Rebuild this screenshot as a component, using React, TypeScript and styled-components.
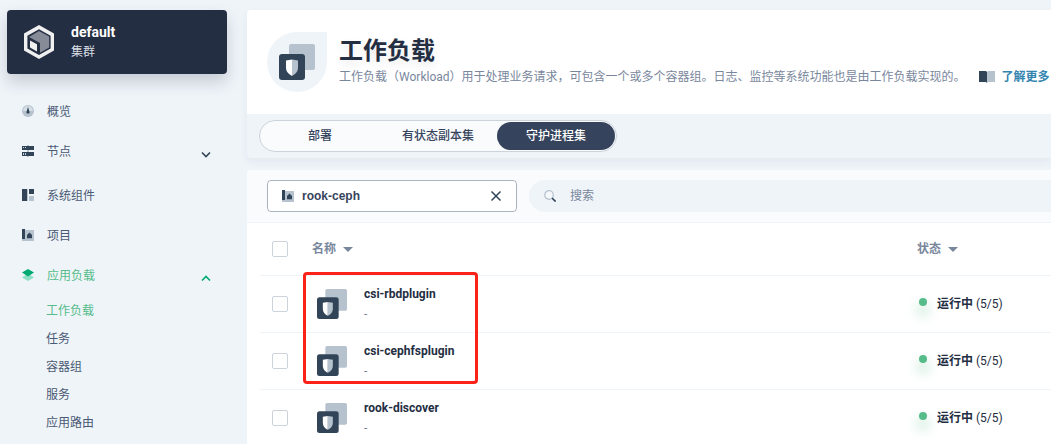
import React from "react";
import styled, { createGlobalStyle } from "styled-components";

const GlobalStyle = createGlobalStyle`
  * { box-sizing: border-box; }
  body {
    margin: 0;
    background: #eff4f9;
    color: #242e42;
    font-family: Roboto, "Noto Sans CJK SC", sans-serif;
    font-size: 12px;
    line-height: 20px;
    overflow: hidden;
  }
  button, input { font: inherit; color: inherit; }
  ul { list-style: none; margin: 0; padding: 0; }
  svg { display: block; flex: none; }
`;

const Page = styled.div`
  display: flex;
  min-height: 100vh;
  padding-top: 10px;
`;

const Sidebar = styled.aside`
  flex: 0 0 247px;
  padding: 0 20px 0 7px;
`;

const ClusterCard = styled.button`
  display: flex;
  align-items: center;
  gap: 12px;
  width: 100%;
  height: 64px;
  padding: 0 12px;
  border: 0;
  border-radius: 4px;
  background: #242e42;
  color: #fff;
  text-align: left;
  box-shadow: 0 8px 16px rgba(36, 46, 66, 0.2);
`;

const ClusterText = styled.span`
  display: flex;
  flex-direction: column;
  color: #d8dee5;
`;

const ClusterName = styled.strong`
  font-size: 14px;
  color: #fff;
`;

const Nav = styled.nav`
  padding-top: 18px;
`;

const NavItem = styled.li<{ $spaced?: boolean }>`
  margin-bottom: ${(p) => (p.$spaced ? 4 : 0)}px;
`;

const NavIcon = styled.span`
  padding-bottom: 2px;
`;

const NavLink = styled.a<{ $active?: boolean }>`
  display: flex;
  align-items: center;
  gap: 13px;
  height: 40px;
  padding: 0 16px 0 15px;
  color: ${(p) => (p.$active ? "#55bc8a" : "#4a5974")};
  text-decoration: none;
`;

const Chevron = styled.svg<{ $active?: boolean }>`
  margin: 4px 0 0 auto;
  fill: none;
  stroke: ${(p) => (p.$active ? "#00aa72" : "#324558")};
  stroke-width: 1.6;
`;

const SubList = styled.ul`
  padding-top: 1px;
`;

const SubLink = styled.a<{ $active?: boolean }>`
  display: block;
  padding: 4px 0 4px 39px;
  color: ${(p) => (p.$active ? "#55bc8a" : "#4a5974")};
  text-decoration: none;
`;

const Main = styled.main`
  flex: 1;
  min-width: 0;
  display: flex;
  flex-direction: column;
  gap: 12px;
`;

const Banner = styled.section`
  border-radius: 4px 0 0 4px;
  background: #eff4f9;
  box-shadow: 0 4px 8px rgba(36, 46, 66, 0.06);
`;

const BannerTop = styled.header`
  display: flex;
  align-items: center;
  gap: 12px;
  height: 104px;
  padding-left: 20px;
  border-radius: 4px 0 0 0;
  background: #fff;
`;

const BannerIcon = styled.div`
  display: grid;
  place-items: center;
  flex: none;
  width: 60px;
  height: 60px;
  border-radius: 50% 0 50% 50%;
  background: #eff4f9;
`;

const BannerText = styled.div`
  padding-bottom: 2px;
`;

const Title = styled.h1`
  margin: 0;
  font-size: 24px;
  line-height: 32px;
  text-shadow: 0 4px 8px rgba(36, 46, 66, 0.1);
`;

const Description = styled.p`
  display: flex;
  align-items: center;
  gap: 12px;
  margin: 0;
  color: #79879c;
  white-space: nowrap;
`;

const LearnMore = styled.a`
  display: flex;
  align-items: center;
  gap: 6px;
  color: #3385b0;
  font-weight: 700;
  text-decoration: none;
`;

const TabStrip = styled.div`
  display: flex;
  padding: 6px 12px;
`;

const Tabs = styled.div`
  display: flex;
  padding: 1px;
  border: 1px solid #ccd3db;
  border-radius: 16px;
  background: #f9fbfd;
`;

const Tab = styled.button<{ $active?: boolean }>`
  width: 118px;
  height: 28px;
  padding: 0;
  border: 0;
  border-radius: 14px;
  background: ${(p) => (p.$active ? "#36435c" : "transparent")};
  color: ${(p) => (p.$active ? "#fff" : "#36435c")};
  font-weight: 500;
`;

const Panel = styled.section`
  flex: 1;
  border-radius: 4px 0 0 0;
  background: #fff;
`;

const Toolbar = styled.div`
  display: flex;
  gap: 12px;
  padding: 10px 0 10px 20px;
  border-bottom: 1px solid #eff4f9;
  border-radius: 4px 0 0 0;
  background: #f9fbfd;
`;

const ProjectFilter = styled.label`
  display: flex;
  align-items: center;
  gap: 8px;
  width: 250px;
  height: 32px;
  padding: 0 14px;
  border: 1px solid #abb4be;
  border-radius: 4px;
  background: #fff;
`;

const ProjectInput = styled.input`
  flex: 1;
  min-width: 0;
  padding: 0;
  border: 0;
  outline: 0;
  background: none;
  color: #36435c;
  font-family: "Liberation Sans", "Noto Sans CJK SC", sans-serif;
  font-weight: 700;
`;

const ClearButton = styled.button`
  padding: 0;
  border: 0;
  background: none;
`;

const SearchBox = styled.label`
  display: flex;
  flex: 1;
  align-items: center;
  gap: 14px;
  height: 32px;
  padding-left: 15px;
  border-radius: 16px 0 0 16px;
  background: #eff4f9;
`;

const SearchInput = styled.input`
  flex: 1;
  min-width: 0;
  padding: 0;
  border: 0;
  outline: 0;
  background: none;
  &::placeholder { color: #79879c; opacity: 1; }
`;

const TableArea = styled.div`
  position: relative;
  padding-left: 13px;
`;

const Table = styled.table`
  width: 100%;
  table-layout: fixed;
  border-collapse: separate;
  border-spacing: 0;
`;

const HeadCell = styled.th<{ $width?: number }>`
  width: ${(p) => (p.$width ? `${p.$width}px` : "auto")};
  height: 53px;
  padding: 0 0 0 12px;
  border-bottom: 1px solid #eff4f9;
  color: #79879c;
  font-weight: 700;
  text-align: left;
`;

const Cell = styled.td`
  height: 57px;
  padding: 0 0 0 12px;
  border-bottom: 1px solid #eff4f9;
`;

const SortButton = styled.button`
  display: flex;
  align-items: center;
  gap: 7px;
  padding: 0;
  border: 0;
  background: none;
`;

const Checkbox = styled.input`
  display: block;
  appearance: none;
  width: 16px;
  height: 16px;
  margin: 0;
  border: 1px solid #ccd3db;
  border-radius: 2px;
  background: #fff;
`;

const Workload = styled.div`
  display: flex;
  align-items: center;
  gap: 17px;
  padding-left: 5px;
`;

const WorkloadText = styled.div`
  display: flex;
  flex-direction: column;
  color: #79879c;
`;

const WorkloadName = styled.a`
  color: #242e42;
  font-weight: 700;
  text-decoration: none;
`;

const Status = styled.div`
  display: flex;
  align-items: center;
  gap: 10px;
  padding-left: 2px;
`;

const StatusDot = styled.span`
  width: 8px;
  height: 8px;
  margin-bottom: 4px;
  border-radius: 50%;
  background: #55bc8a;
  box-shadow: 0 8px 12px 3px rgba(85, 188, 138, 0.24);
`;

const Highlight = styled.div`
  position: absolute;
  top: 49px;
  left: 56px;
  width: 175px;
  height: 112px;
  border: 3px solid #fb2318;
  border-radius: 4px;
  pointer-events: none;
`;

const ClusterIcon = () => (
  <svg width="40" height="40" viewBox="0 0 40 40">
    <path d="M20 3 35 11.4v17.2L20 37 5 28.6V11.4z" fill="#f0f0f0" />
    <path d="M20 7.2 31.6 13.8v12.6L20 33 8.4 26.4V13.8z" fill="#242e42" />
    <path d="M20 9 30.2 14.6v10.8L21 30.8V21L10 15z" fill="#868b97" />
    <path d="M11 18.4 18 22.2v7.2l-7-4z" fill="#f0f0f0" />
  </svg>
);

const WorkloadIcon = ({ size }: { size: number }) => (
  <svg width={size} height={size} viewBox="2 2 36 36">
    <rect x="12" y="2" width="26" height="26" rx="2" fill="#b6c2cd" />
    <rect x="2" y="12" width="26" height="26" rx="3" fill="#324558" />
    <path d="M15 17.6 9 18.6v7c0 4.4 3 7 6 8.4z" fill="#fff" />
    <path d="M15 17.6 21 18.6v7c0 4.4-3 7-6 8.4z" fill="#b6c2cd" />
  </svg>
);

const OverviewIcon = () => (
  <svg width="12" height="12" viewBox="0 0 12 12">
    <circle cx="6" cy="6" r="6" fill="#b6c2cd" />
    <path d="M6 1a5 5 0 0 1 5 5H1a5 5 0 0 1 5-5z" fill="#d5dde5" />
    <path d="M6 2 7.4 6.4a1.5 1.5 0 1 1-2.8 0z" fill="#324558" />
  </svg>
);

const NodeIcon = () => (
  <svg width="12" height="12" viewBox="0 0 12 12">
    <path d="M5 0h2v12H5z" fill="#b6c2cd" />
    <path d="M0 1h12v4H0zM0 7h12v4H0z" fill="#324558" />
    <path d="M1 2h1v1H1zM3 2h1v1H3zM1 8h1v2H1zM3 8h1v2H3z" fill="#c8d1da" />
  </svg>
);

const ComponentIcon = () => (
  <svg width="12" height="12" viewBox="0 0 12 12">
    <path d="M0 0h5v12H0zM7 0h5v5H7z" fill="#324558" />
    <path d="M5 0h1v12H5zM7 7h5v5H7z" fill="#b6c2cd" />
  </svg>
);

const ProjectIcon = () => (
  <svg width="12" height="12" viewBox="0 0 12 12">
    <path d="M3 1h9v11H0V10h3z" fill="#b6c2cd" />
    <path d="M0 0h3v10H0z" fill="#324558" />
    <path d="M7.5 3.6 10 6v3.2H5V6z" fill="#324558" />
  </svg>
);

const AppIcon = () => (
  <svg width="12" height="12" viewBox="0 0 12 12">
    <path d="M6 4.6 12 8.4 6 12 0 8.4z" fill="#90e0c5" />
    <path d="M6 0 12 3.6 6 7.4 0 3.6z" fill="#00aa72" />
  </svg>
);

const BookIcon = () => (
  <svg width="18" height="14" viewBox="0 0 18 14">
    <path d="M1 1h7l1 1v11l-1-1H1z" fill="#324558" />
    <path d="M17 1h-7L9 2v11l1-1h7z" fill="#b6c2cd" />
  </svg>
);

const SearchIcon = () => (
  <svg width="12" height="12" viewBox="0 0 12 12">
    <circle cx="5" cy="5" r="4.3" fill="#f9fbfd" fillOpacity="0.5" stroke="#b6c2cd" strokeWidth="1.2" />
    <path d="m8 8 3.6 3.6" stroke="#324558" strokeWidth="1.6" />
  </svg>
);

const CloseIcon = () => (
  <svg width="12" height="12" viewBox="0 0 12 12">
    <path d="m1.5 1.5 9 9M10.5 1.5l-9 9" stroke="#324558" strokeWidth="1.5" />
  </svg>
);

const CaretIcon = () => (
  <svg width="10" height="5" viewBox="0 0 10 5">
    <path d="M0 0h10L5 5z" fill="#79879c" />
  </svg>
);

const navItems = [
  { label: "概览", icon: <OverviewIcon /> },
  { label: "节点", icon: <NodeIcon />, chevron: "m1 1.5 4 4 4-4", spaced: true },
  { label: "系统组件", icon: <ComponentIcon /> },
  { label: "项目", icon: <ProjectIcon /> },
  { label: "应用负载", icon: <AppIcon />, chevron: "m1 5.5 4-4 4 4", active: true },
];
const subItems = ["工作负载", "任务", "容器组", "服务", "应用路由"];
const tabs = ["部署", "有状态副本集", "守护进程集"];
const workloads = ["csi-rbdplugin", "csi-cephfsplugin", "rook-discover"];

export default function App() {
  return (
    <>
      <GlobalStyle />
      <Page>
        <Sidebar>
          <ClusterCard>
            <ClusterIcon />
            <ClusterText>
              <ClusterName>default</ClusterName>
              <span>集群</span>
            </ClusterText>
          </ClusterCard>
          <Nav>
            <ul>
              {navItems.map((item) => (
                <NavItem key={item.label} $spaced={item.spaced}>
                  <NavLink href="#" $active={item.active}>
                    <NavIcon>{item.icon}</NavIcon>
                    <span>{item.label}</span>
                    {item.chevron && (
                      <Chevron width="10" height="7" viewBox="0 0 10 7" $active={item.active}>
                        <path d={item.chevron} />
                      </Chevron>
                    )}
                  </NavLink>
                </NavItem>
              ))}
            </ul>
            <SubList>
              {subItems.map((label, i) => (
                <li key={label}>
                  <SubLink href="#" $active={i === 0}>{label}</SubLink>
                </li>
              ))}
            </SubList>
          </Nav>
        </Sidebar>
        <Main>
          <Banner>
            <BannerTop>
              <BannerIcon><WorkloadIcon size={36} /></BannerIcon>
              <BannerText>
                <Title>工作负载</Title>
                <Description>
                  <span>工作负载（Workload）用于处理业务请求，可包含一个或多个容器组。日志、监控等系统功能也是由工作负载实现的。</span>
                  <LearnMore href="#"><BookIcon />了解更多</LearnMore>
                </Description>
              </BannerText>
            </BannerTop>
            <TabStrip>
              <Tabs role="tablist">
                {tabs.map((label, i) => (
                  <Tab key={label} role="tab" aria-selected={i === 2} $active={i === 2}>{label}</Tab>
                ))}
              </Tabs>
            </TabStrip>
          </Banner>
          <Panel>
            <Toolbar>
              <ProjectFilter>
                <ProjectIcon />
                <ProjectInput aria-label="项目" defaultValue="rook-ceph" />
                <ClearButton aria-label="清除"><CloseIcon /></ClearButton>
              </ProjectFilter>
              <SearchBox>
                <SearchIcon />
                <SearchInput aria-label="搜索" placeholder="搜索" />
              </SearchBox>
            </Toolbar>
            <TableArea>
              <Table>
                <thead>
                  <tr>
                    <HeadCell $width={40}><Checkbox type="checkbox" aria-label="全选" /></HeadCell>
                    <HeadCell><SortButton>名称<CaretIcon /></SortButton></HeadCell>
                    <HeadCell $width={146}><SortButton>状态<CaretIcon /></SortButton></HeadCell>
                  </tr>
                </thead>
                <tbody>
                  {workloads.map((name) => (
                    <tr key={name}>
                      <Cell><Checkbox type="checkbox" aria-label={name} /></Cell>
                      <Cell>
                        <Workload>
                          <WorkloadIcon size={30} />
                          <WorkloadText>
                            <WorkloadName href="#">{name}</WorkloadName>
                            <span>-</span>
                          </WorkloadText>
                        </Workload>
                      </Cell>
                      <Cell>
                        <Status>
                          <StatusDot />
                          <span><strong>运行中</strong> (5/5)</span>
                        </Status>
                      </Cell>
                    </tr>
                  ))}
                </tbody>
              </Table>
              <Highlight />
            </TableArea>
          </Panel>
        </Main>
      </Page>
    </>
  );
}
